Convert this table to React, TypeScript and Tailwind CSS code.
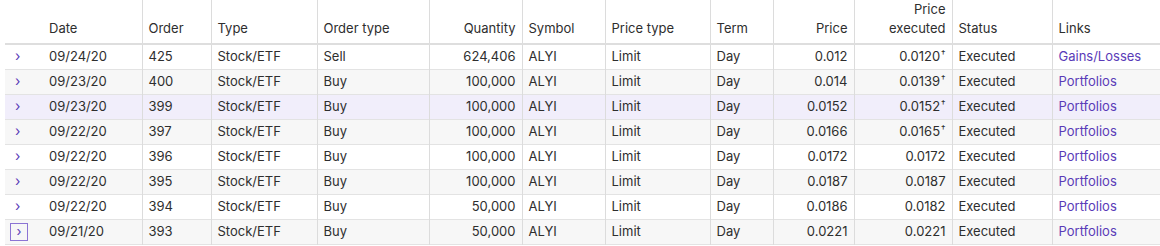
import { ReactElement } from "react";

interface Order {
      date: string;
      order: string;
      quantity: string;
      side: string;
      price: string;
      executed: string;
      dagger: boolean;
      link: string;
}

const orders: Order[] = [
      { date: "09/24/20", order: "425", side: "Sell", quantity: "624,406", price: "0.012", executed: "0.0120", dagger: true, link: "Gains/Losses" },
      { date: "09/23/20", order: "400", side: "Buy", quantity: "100,000", price: "0.014", executed: "0.0139", dagger: true, link: "Portfolios" },
      { date: "09/23/20", order: "399", side: "Buy", quantity: "100,000", price: "0.0152", executed: "0.0152", dagger: true, link: "Portfolios" },
      { date: "09/22/20", order: "397", side: "Buy", quantity: "100,000", price: "0.0166", executed: "0.0165", dagger: true, link: "Portfolios" },
      { date: "09/22/20", order: "396", side: "Buy", quantity: "100,000", price: "0.0172", executed: "0.0172", dagger: false, link: "Portfolios" },
      { date: "09/22/20", order: "395", side: "Buy", quantity: "100,000", price: "0.0187", executed: "0.0187", dagger: false, link: "Portfolios" },
      { date: "09/22/20", order: "394", side: "Buy", quantity: "50,000", price: "0.0186", executed: "0.0182", dagger: false, link: "Portfolios" },
      { date: "09/21/20", order: "393", side: "Buy", quantity: "50,000", price: "0.0221", executed: "0.0221", dagger: false, link: "Portfolios" },
];

const th = "border-l border-[#dcdcdc] px-[6px] pb-[5px] align-bottom font-normal leading-[19px]";
const td = "border-l border-[#dcdcdc] px-[6px] h-[25px] py-0";

const App = (): ReactElement => {
      return (
            <div className="w-[1160px] h-[246px] bg-white overflow-hidden pl-[5px] text-[13px] text-[#2e2e2e] font-['Inter',sans-serif]">
                  <table className="border-collapse table-fixed w-[1160px]">
                        <colgroup>
                              <col className="w-[35px]" />
                              <col className="w-[102px]" />
                              <col className="w-[69px]" />
                              <col className="w-[106px]" />
                              <col className="w-[112px]" />
                              <col className="w-[93px]" />
                              <col className="w-[83px]" />
                              <col className="w-[105px]" />
                              <col className="w-[63px]" />
                              <col className="w-[81px]" />
                              <col className="w-[98px]" />
                              <col className="w-[100px]" />
                              <col className="w-[113px]" />
                        </colgroup>
                        <thead>
                              <tr className="h-[43px] border-b-2 border-[#dedede]">
                                    <th className="font-normal"></th>
                                    <th className="px-[9px] pb-[5px] align-bottom font-normal text-left leading-[19px]">Date</th>
                                    <th className={`${th} text-left`}>Order</th>
                                    <th className={`${th} text-left`}>Type</th>
                                    <th className={`${th} text-left`}>Order type</th>
                                    <th className={`${th} text-right`}>Quantity</th>
                                    <th className={`${th} text-left`}>Symbol</th>
                                    <th className={`${th} text-left`}>Price type</th>
                                    <th className={`${th} text-left`}>Term</th>
                                    <th className={`${th} text-right`}>Price</th>
                                    <th className={`${th} text-right`}>Price<br />executed</th>
                                    <th className={`${th} text-left`}>Status</th>
                                    <th className={`${th} text-left`}>Links</th>
                              </tr>
                        </thead>
                        <tbody>
                              {orders.map((o, i) => (
                                    <tr
                                          key={o.order}
                                          className={`border-b border-[#e3e3e3] ${i === 2 ? "bg-[#f1eefb]" : i % 2 === 1 ? "bg-[#f7f7f7]" : "bg-white"}`}
                                    >
                                          <td className="h-[25px] p-0">
                                                {i === 7 ? (
                                                      <span className="ml-[5px] flex w-[18px] h-[18px] items-center justify-center border-[1.5px] border-[#8c74d4] text-[#5a3bb8] text-[13px] leading-none">
                                                            ›
                                                      </span>
                                                ) : (
                                                      <span className="ml-[10px] text-[#5a3bb8] text-[14px] leading-none">›</span>
                                                )}
                                          </td>
                                          <td className="px-[9px] h-[25px] py-0">{o.date}</td>
                                          <td className={td}>{o.order}</td>
                                          <td className={td}>Stock/ETF</td>
                                          <td className={td}>{o.side}</td>
                                          <td className={`${td} text-right`}>{o.quantity}</td>
                                          <td className={td}>ALYI</td>
                                          <td className={td}>Limit</td>
                                          <td className={td}>Day</td>
                                          <td className={`${td} text-right`}>{o.price}</td>
                                          <td className={`${td} text-right`}>
                                                {o.executed}
                                                {o.dagger && <sup className="text-[9px] ml-[1px] -top-[4px]">†</sup>}
                                          </td>
                                          <td className={td}>Executed</td>
                                          <td className={`${td} text-[#5a3bb8]`}>{o.link}</td>
                                    </tr>
                              ))}
                        </tbody>
                  </table>
            </div>
      );
};

export default App;
